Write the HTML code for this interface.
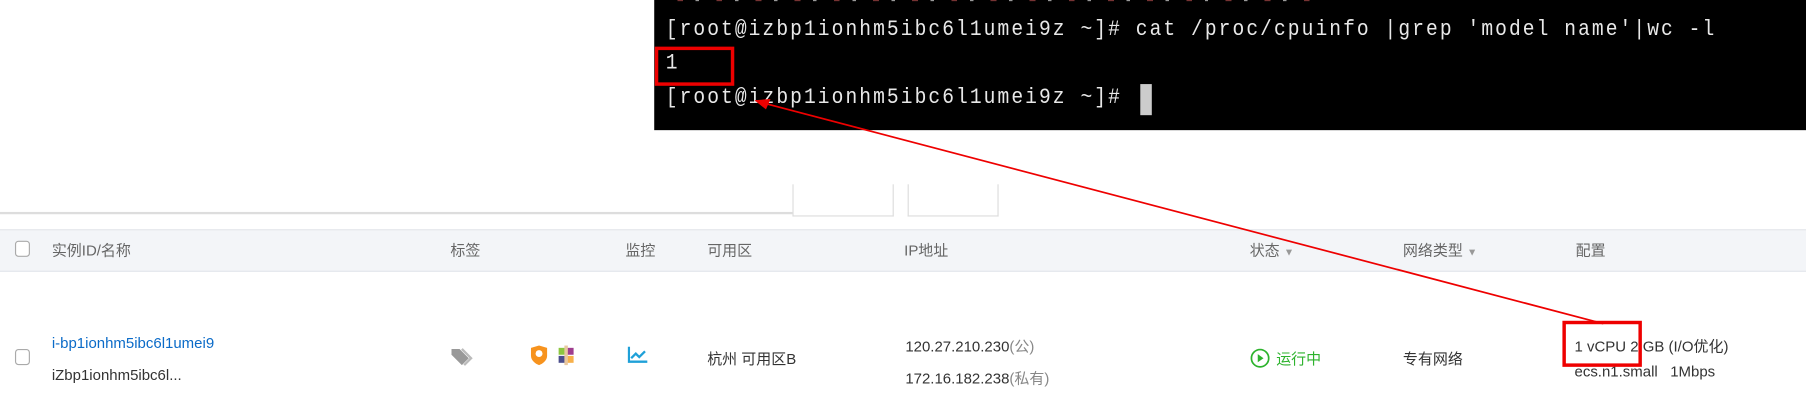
<!DOCTYPE html>
<html><head><meta charset="utf-8"><style>
html,body{margin:0;padding:0;background:#fff;width:1806px;height:420px;overflow:hidden}
#s{position:absolute;left:0;top:0;width:1568px;height:365px;transform:scale(1.1518);transform-origin:0 0;font-family:"Liberation Sans","Noto Sans CJK SC",sans-serif;font-size:13px;color:#333}
.a{position:absolute;white-space:nowrap}
.term{position:absolute;left:568px;top:0;width:1000px;height:113px;background:#000}
.tl{position:absolute;left:10px;color:#e8e8e8;font-family:"Liberation Mono",monospace;font-size:17px;letter-spacing:1.8px;transform:scaleY(1.15);transform-origin:0 50%}
.hd{color:#666}
.cb{position:absolute;width:11px;height:12px;border:1px solid #aaa;border-radius:3px;background:#fff}
</style></head><body><div id="s">
<div class="term">
<div class="a" style="left:20px;top:-5px;width:560px;height:6px;background:repeating-linear-gradient(90deg,#733 0 5px,#000 5px 16px,#999 16px 19px,#000 19px 34px)"></div>
<div class="tl" style="top:17px">[root@izbp1ionhm5ibc6l1umei9z ~]# cat /proc/cpuinfo |grep 'model name'|wc -l</div>
<div class="tl" style="top:46px">1</div>
<div class="tl" style="top:76px">[root@izbp1ionhm5ibc6l1umei9z ~]#</div>
<div class="a" style="left:422px;top:73px;width:10px;height:27px;background:#ccc"></div>
</div>
<div class="a" style="left:0;top:184px;width:688px;height:2px;background:#ddd"></div>
<div class="a" style="left:688px;top:160px;width:86px;height:27px;border:1px solid #ddd;border-top:none"></div>
<div class="a" style="left:788px;top:160px;width:77px;height:27px;border:1px solid #ddd;border-top:none"></div>
<div class="a" style="left:0;top:199px;width:1568px;height:35px;background:#f3f5f8;border-top:1px solid #e3e6eb;border-bottom:1px solid #e3e6eb"></div>
<div class="cb" style="left:13px;top:209px"></div>
<div class="a hd" style="left:45px;top:207px">实例ID/名称</div>
<div class="a hd" style="left:391px;top:207px">标签</div>
<div class="a hd" style="left:543px;top:207px">监控</div>
<div class="a hd" style="left:614px;top:207px">可用区</div>
<div class="a hd" style="left:785px;top:207px">IP地址</div>
<div class="a hd" style="left:1085px;top:207px">状态 <span style="font-size:9px;color:#999">▼</span></div>
<div class="a hd" style="left:1218px;top:207px">网络类型 <span style="font-size:9px;color:#999">▼</span></div>
<div class="a hd" style="left:1368px;top:207px">配置</div>
<div class="cb" style="left:13px;top:303px"></div>
<div class="a" style="left:45px;top:290px;color:#0b6bc8">i-bp1ionhm5ibc6l1umei9</div>
<div class="a" style="left:45px;top:318px">iZbp1ionhm5ibc6l...</div>
<svg class="a" style="left:390px;top:300px" width="24" height="20"><path d="M2 3h7l8 8-6 6-9-9z" fill="#999"/><path d="M11 3l8 8-6 6" stroke="#bbb" stroke-width="2" fill="none"/></svg>
<svg class="a" style="left:460px;top:300px" width="16" height="18"><path d="M1 2l7-2 7 2v7c0 4-4 7-7 8-3-1-7-4-7-8z" fill="#f7931e"/><circle cx="8" cy="7" r="3" fill="#fff"/></svg>
<svg class="a" style="left:483px;top:300px" width="18" height="18"><rect x="2" y="2" width="6" height="6" fill="#8cc63f"/><rect x="9" y="2" width="6" height="6" fill="#9e3d8e"/><rect x="2" y="9" width="6" height="6" fill="#4b4e8c"/><rect x="9" y="9" width="6" height="6" fill="#f7b04a"/><rect x="7" y="0" width="3" height="17" fill="#e9c8a0"/></svg>
<svg class="a" style="left:545px;top:300px" width="18" height="16"><path d="M1 1v13h16M3 11l4-4 3 3 5-5" stroke="#1fa0d8" stroke-width="2" fill="none"/></svg>
<div class="a" style="left:614px;top:301px">杭州 可用区B</div>
<div class="a" style="left:786px;top:290px">120.27.210.230<span style="color:#888">(公)</span></div>
<div class="a" style="left:786px;top:318px">172.16.182.238<span style="color:#888">(私有)</span></div>
<svg class="a" style="left:1085px;top:302px" width="18" height="18"><circle cx="9" cy="9" r="7.5" stroke="#2db32d" stroke-width="1.5" fill="none"/><path d="M7 5.5v7l5-3.5z" fill="#2db32d"/></svg>
<div class="a" style="left:1108px;top:301px;color:#2db32d">运行中</div>
<div class="a" style="left:1218px;top:301px">专有网络</div>
<div class="a" style="left:1367px;top:290px">1 vCPU 2 GB (I/O优化)</div>
<div class="a" style="left:1367px;top:315px">ecs.n1.small &nbsp; 1Mbps</div>
<svg class="a" style="left:0;top:0" width="1568" height="365">
<rect x="570" y="42" width="66" height="31" fill="none" stroke="#e00" stroke-width="3"/>
<rect x="1358" y="280" width="66" height="37" fill="none" stroke="#e00" stroke-width="3"/>
<line x1="1392" y1="281" x2="665" y2="90" stroke="#e00" stroke-width="1.5"/>
<path d="M655 87l14-1-4 9z" fill="#e00"/>
</svg>
</div></body></html>
